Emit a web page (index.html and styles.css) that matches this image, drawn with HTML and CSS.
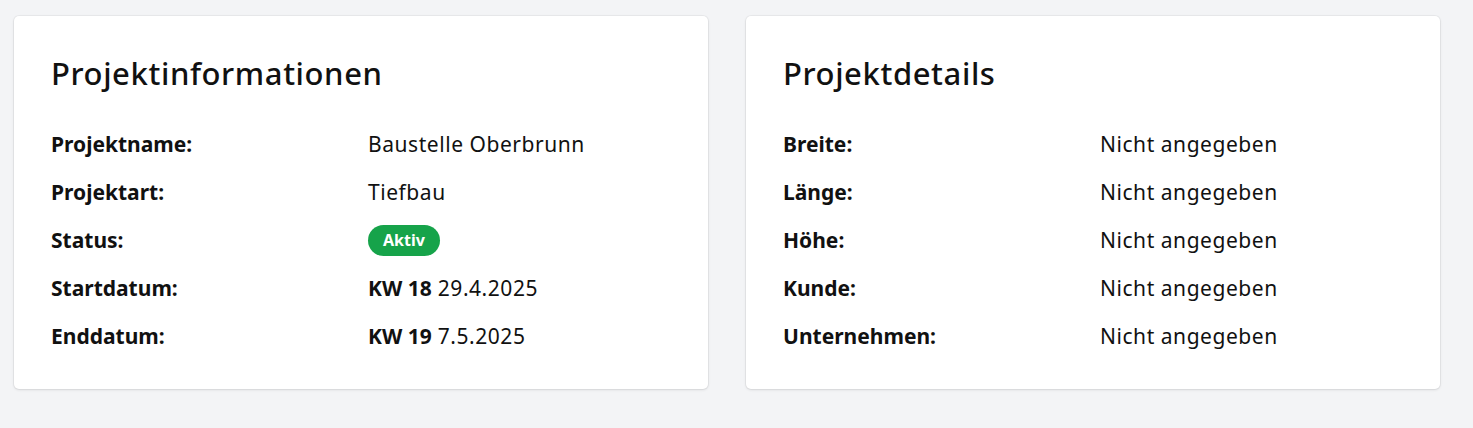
FILE: index.html
```html
<!DOCTYPE html>
<html lang="de">
<head>
<meta charset="utf-8">
<title>Projekt</title>
<link rel="stylesheet" href="styles.css">
</head>
<body>
<main class="grid">
  <section class="card">
    <h2 class="title">Projektinformationen</h2>
    <dl class="rows">
      <div class="row"><dt>Projektname:</dt><dd>Baustelle Oberbrunn</dd></div>
      <div class="row"><dt>Projektart:</dt><dd>Tiefbau</dd></div>
      <div class="row"><dt>Status:</dt><dd><span class="badge">Aktiv</span></dd></div>
      <div class="row"><dt>Startdatum:</dt><dd><b>KW 18</b> 29.4.2025</dd></div>
      <div class="row"><dt>Enddatum:</dt><dd><b>KW 19</b> 7.5.2025</dd></div>
    </dl>
  </section>
  <section class="card">
    <h2 class="title">Projektdetails</h2>
    <dl class="rows">
      <div class="row"><dt>Breite:</dt><dd>Nicht angegeben</dd></div>
      <div class="row"><dt>Länge:</dt><dd>Nicht angegeben</dd></div>
      <div class="row"><dt>Höhe:</dt><dd>Nicht angegeben</dd></div>
      <div class="row"><dt>Kunde:</dt><dd>Nicht angegeben</dd></div>
      <div class="row"><dt>Unternehmen:</dt><dd>Nicht angegeben</dd></div>
    </dl>
  </section>
</main>
</body>
</html>
```
FILE: styles.css
```css
html, body {
  margin: 0;
  background: #f3f4f6;
  font-family: "Noto Sans", "Open Sans", sans-serif;
  color: #111;
}
.grid {
  display: grid;
  grid-template-columns: 694px 694px;
  column-gap: 38px;
  padding: 16px 14px;
}
.card {
  background: #fff;
  border-radius: 5px;
  box-shadow: 0 0 0 1px rgba(0,0,0,0.04), 0 1px 3px rgba(0,0,0,0.1);
  padding: 36px 37px 29px;
  height: 373px;
  box-sizing: border-box;
}
.title {
  margin: 0 0 26px;
  font-size: 31px;
  font-weight: 500;
  letter-spacing: 0.6px;
  line-height: 42px;
}
.rows {
  margin: 0;
}
.row {
  display: grid;
  grid-template-columns: 317px 1fr;
  height: 48px;
  align-items: center;
  font-size: 21px;
}
.row dt {
  font-weight: 700;
}
.row dd {
  margin: 0;
  letter-spacing: 0.55px;
}
.row dd b {
  letter-spacing: 0;
}
.badge {
  display: inline-block;
  background: #16a34a;
  color: #fff;
  font-size: 16px;
  font-weight: 700;
  letter-spacing: 0;
  border-radius: 16px;
  padding: 4px 15px;
  line-height: 23px;
}
```
